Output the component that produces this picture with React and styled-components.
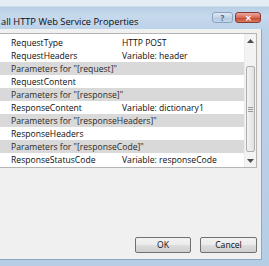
import styled, { createGlobalStyle } from "styled-components";

const GlobalStyle = createGlobalStyle`
  html, body { margin: 0; padding: 0; }
  body {
    width: 269px;
    height: 266px;
    overflow: hidden;
    font-family: "Open Sans", "Noto Sans", "Liberation Sans", sans-serif;
  }
`;

const rows = [
  { kind: "prop", name: "RequestType", value: "HTTP POST" },
  { kind: "prop", name: "RequestHeaders", value: "Variable: header" },
  { kind: "group", name: 'Parameters for "[request]"' },
  { kind: "prop", name: "RequestContent", value: "" },
  { kind: "group", name: 'Parameters for "[response]"' },
  { kind: "prop", name: "ResponseContent", value: "Variable: dictionary1" },
  { kind: "group", name: 'Parameters for "[responseHeaders]"' },
  { kind: "prop", name: "ResponseHeaders", value: "" },
  { kind: "group", name: 'Parameters for "[responseCode]"' },
  { kind: "prop", name: "ResponseStatusCode", value: "Variable: responseCode" },
];

const Frame = styled.div`
  width: 269px;
  height: 266px;
  display: flex;
  flex-direction: column;
  background: linear-gradient(180deg, #e4ecf4 0px, #e4ecf4 6px, #b8cfe6 7px, #c6d9ec 16px, #bcd2e9 29px, #b6cde6 100%);
  overflow: hidden;
`;

const TitleBar = styled.div`
  height: 29px;
  flex: none;
  display: flex;
  align-items: center;
  padding-top: 6px;
  box-sizing: border-box;
`;

const Title = styled.div`
  flex: 1;
  padding-left: 1px;
  margin-top: 7px;
  font-size: 9.3px;
  color: #0d0d0d;
  white-space: nowrap;
`;

const CaptionButton = styled.div`
  height: 9px;
  width: ${p => p.$w}px;
  margin-right: ${p => p.$mr}px;
  border: 1px solid ${p => (p.$close ? "#8a3a33" : "#8aa2bd")};
  border-radius: 3px;
  background: ${p =>
    p.$close
      ? "linear-gradient(180deg, #eaa99e 0%, #d66a57 50%, #c2442f 51%, #d9785c 100%)"
      : "linear-gradient(180deg, #dfe9f4 0%, #c3d4e6 50%, #b3c7de 51%, #c6d7ea 100%)"};
  display: flex;
  align-items: center;
  justify-content: center;
  color: ${p => (p.$close ? "#fff" : "#4a6283")};
  font-size: 8px;
  font-weight: bold;
  line-height: 1;
`;

const Body = styled.div`
  flex: 1;
  margin-right: 7px;
  margin-bottom: 6px;
  background: #f0f0f0;
  border-right: 1px solid #8ea6c0;
  border-bottom: 1px solid #8ea6c0;
  display: flex;
  flex-direction: column;
  padding: 4px 4px 6px 0;
`;

const ListBox = styled.div`
  height: 133px;
  background: #fff;
  border: 1px solid #b5b5b5;
  border-left: none;
  display: flex;
`;

const Rows = styled.div`
  flex: 1;
  padding-top: 2px;
`;

const Row = styled.div`
  height: 13px;
  display: grid;
  grid-template-columns: 111px 1fr;
  align-items: center;
  padding-left: 11px;
  font-size: 8.6px;
  background: ${p => (p.$group ? "#d9d9d9" : "#fff")};
  white-space: nowrap;
`;

const Cell = styled.span`
  grid-column: ${p => (p.$span ? "1 / span 2" : "auto")};
  color: ${p => (p.$group ? "#2a2a2a" : "#0d0d0d")};
`;

const ScrollBar = styled.div`
  width: 11px;
  display: flex;
  flex-direction: column;
  background: #f3f3f3;
  border-left: 1px solid #ececec;
`;

const Arrow = styled.div`
  height: 13px;
  display: flex;
  align-items: center;
  justify-content: center;
`;

const Track = styled.div`
  flex: 1;
  display: flex;
  flex-direction: column;
  padding: 19px 1px 2px;
`;

const Thumb = styled.div`
  flex: 1;
  border: 1px solid #aeaeae;
  border-radius: 2px;
  background: linear-gradient(90deg, #f2f2f2, #e2e2e2);
  display: flex;
  align-items: center;
  justify-content: center;
`;

const Spacer = styled.div`
  flex: 1;
`;

const ButtonRow = styled.div`
  display: flex;
  justify-content: flex-end;
  gap: 9px;
`;

const Button = styled.button`
  width: ${p => p.$w}px;
  height: 16px;
  padding: 0;
  border: 1px solid #707070;
  border-radius: 2px;
  background: linear-gradient(180deg, #f2f2f2 0%, #ebebeb 50%, #dddddd 51%, #cfcfcf 100%);
  font-family: inherit;
  font-size: 8.6px;
  color: #0d0d0d;
`;

function ArrowIcon({ up }) {
  return (
    <svg width="7" height="4" viewBox="0 0 7 4">
      <path d={up ? "M0 4 L3.5 0 L7 4 Z" : "M0 0 L3.5 4 L7 0 Z"} fill="#4d4d4d" />
    </svg>
  );
}

function Grip() {
  return (
    <svg width="5" height="5" viewBox="0 0 5 5">
      <path d="M0 0.5H5M0 2.5H5M0 4.5H5" stroke="#9a9a9a" strokeWidth="1" />
    </svg>
  );
}

export default function App() {
  return (
    <Frame>
      <GlobalStyle />
      <TitleBar>
        <Title>all HTTP Web Service Properties</Title>
        <CaptionButton $w={19} $mr={2}>?</CaptionButton>
        <CaptionButton $w={24} $mr={8} $close>✕</CaptionButton>
      </TitleBar>
      <Body>
        <ListBox>
          <Rows>
            {rows.map((r, i) =>
              r.kind === "group" ? (
                <Row key={i} $group>
                  <Cell $span $group>{r.name}</Cell>
                </Row>
              ) : (
                <Row key={i}>
                  <Cell>{r.name}</Cell>
                  <Cell>{r.value}</Cell>
                </Row>
              )
            )}
          </Rows>
          <ScrollBar>
            <Arrow><ArrowIcon up /></Arrow>
            <Track>
              <Thumb><Grip /></Thumb>
            </Track>
            <Arrow><ArrowIcon /></Arrow>
          </ScrollBar>
        </ListBox>
        <Spacer />
        <ButtonRow>
          <Button $w={56}>OK</Button>
          <Button $w={57}>Cancel</Button>
        </ButtonRow>
      </Body>
    </Frame>
  );
}
